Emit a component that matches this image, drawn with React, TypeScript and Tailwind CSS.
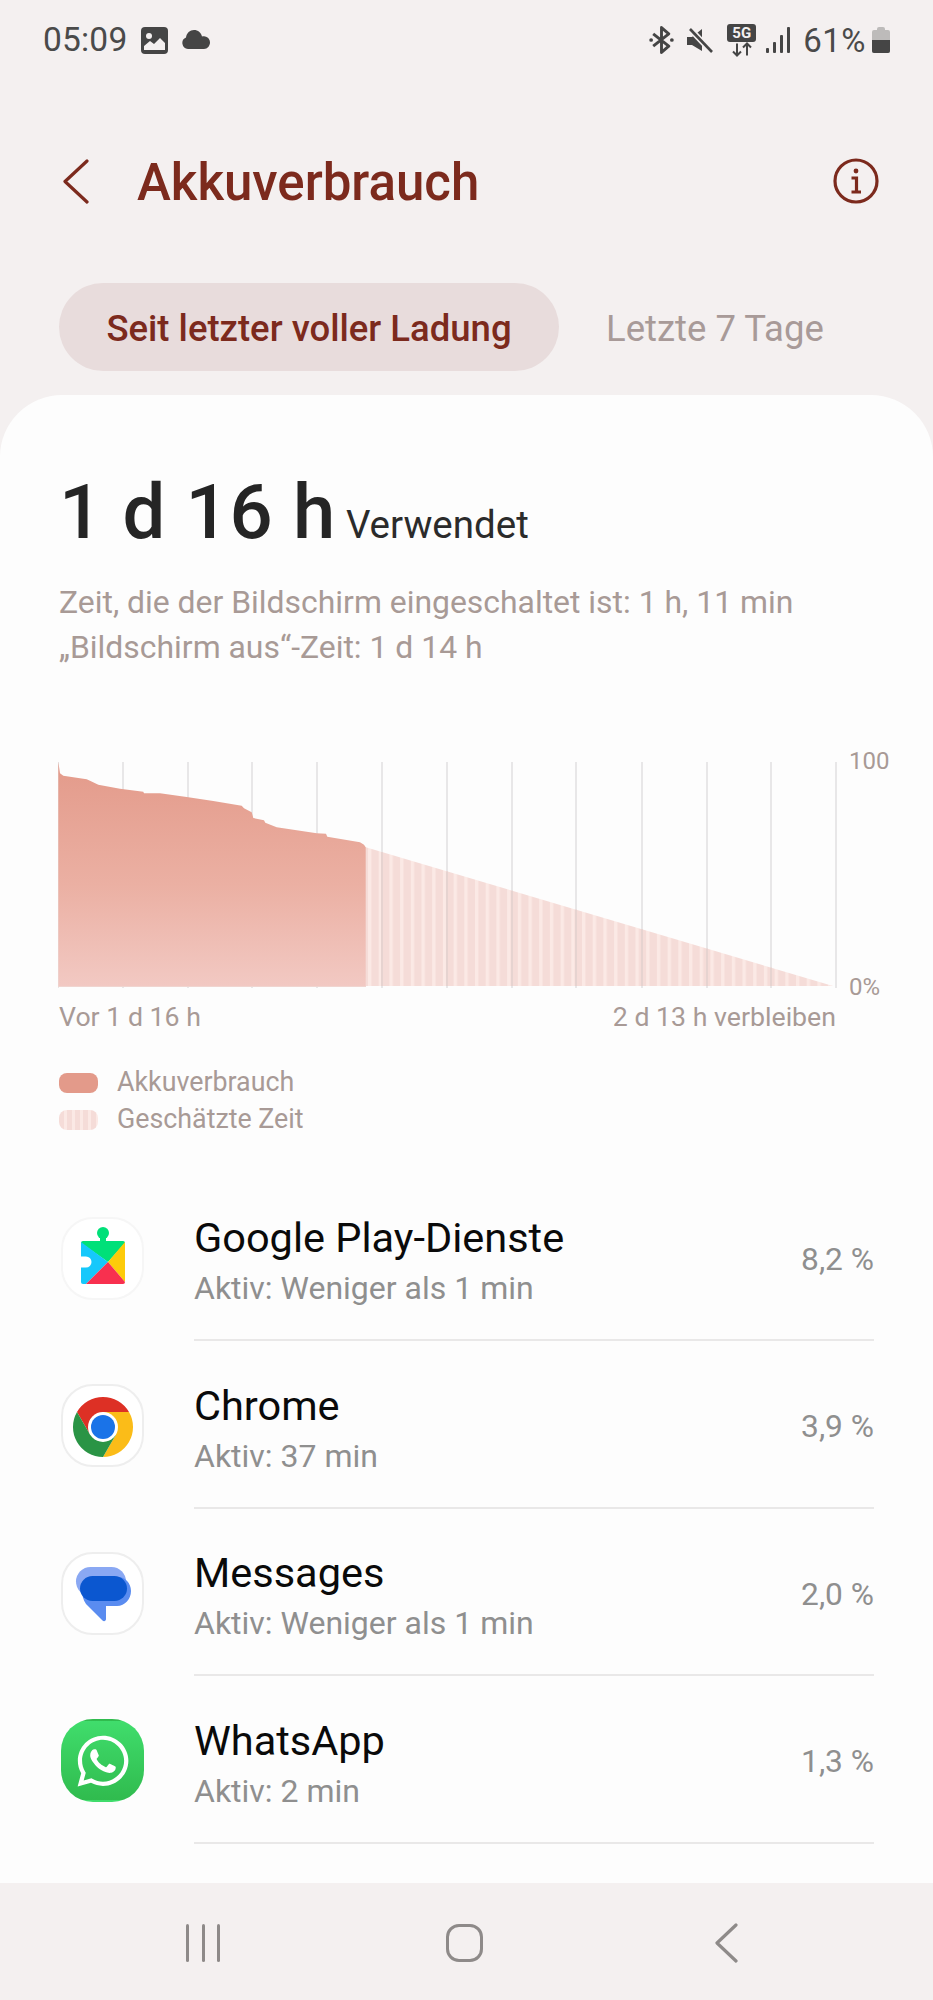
import { FaWhatsapp } from "react-icons/fa";

const curve: [number, number][] = [
  [55, 35], [60, 70], [70, 77], [140, 88], [150, 92], [175, 104], [240, 116], [310, 125], [312, 130],
  [360, 130], [440, 141], [520, 153], [605, 167], [612, 175], [635, 187], [640, 204], [672, 211], [676, 218],
  [710, 232], [830, 250], [858, 251], [862, 260], [960, 277], [972, 284], [977, 292], [977, 710], [55, 710],
];
const usedPoints = curve.map(([x, y]) => `${(40 + x / 3 - 58).toFixed(1)},${(750 + y / 3 - 760).toFixed(1)}`).join(" ");
const gridX = [58, 123, 188, 252, 317, 382, 447, 512, 576, 642, 707, 771, 836];

function BatteryChart() {
  return (
    <svg width="780" height="234" viewBox="0 0 780 234" className="block">
      <defs>
        <linearGradient id="used" x1="0" y1="0" x2="0" y2="1">
          <stop offset="0" stopColor="#e39a8a" />
          <stop offset="0.55" stopColor="#ebb0a3" />
          <stop offset="1" stopColor="#f2c9c3" />
        </linearGradient>
        <pattern id="stripes" width="10.7" height="10" patternUnits="userSpaceOnUse" x="310">
          <rect width="10.7" height="10" fill="#f5dcd8" />
          <rect width="3.4" height="10" fill="#fbe9e5" />
        </pattern>
      </defs>
      {gridX.map((x) => (
        <rect key={x} x={x - 58 - 1} y="2" width="2" height="226" fill="#e8e7e8" />
      ))}
      <polygon points="307,87 775,226 307,226" fill="url(#stripes)" />
      {gridX.filter((x) => x > 370 && x < 830).map((x) => (
        <rect key={x} x={x - 58 - 1} y={87 + ((x - 58 - 307) * 139) / 468} width="2" height={139 - ((x - 58 - 307) * 139) / 468} fill="#e6d3d0" />
      ))}
      <polygon points={usedPoints} fill="url(#used)" />
      <rect x="0" y="226" width="308" height="1" fill="#f0d5d0" />
    </svg>
  );
}

function PlayIcon() {
  return (
    <svg viewBox="0 0 82 82" className="w-[82px] h-[82px] shrink-0">
      <circle cx="41" cy="16" r="6" fill="#00e079" />
      <path d="M19 26a2 2 0 0 1 2-2h40a2 2 0 0 1 2 2L46 45Z" fill="#00e079" />
      <rect x="38" y="18" width="6" height="8" fill="#00e079" />
      <path d="M19 25 46 45 24 67H21a2 2 0 0 1-2-2Z" fill="#16c8fb" />
      <path d="M63 25V65L46 45Z" fill="#fdcb0a" />
      <path d="M46 45 63 65a2 2 0 0 1-2 2H24Z" fill="#f8304f" />
      <path d="M19 39.5h5a5.5 5.5 0 0 1 0 11h-5Z" fill="#fff" />
    </svg>
  );
}

function ChromeIcon() {
  return (
    <svg viewBox="0 0 82 82" className="w-[82px] h-[82px] shrink-0">
      <path d="M15 27A30 30 0 0 1 67 27H41L28 49.5Z" fill="#dd3025" />
      <path d="M67 27A30 30 0 0 1 41 72L54 49.5 41 27Z" fill="#fbbc18" />
      <path d="M41 72A30 30 0 0 1 15 27L28 49.5 54 49.5Z" fill="#2a9445" />
      <circle cx="41" cy="42" r="15" fill="#fff" />
      <circle cx="41" cy="42" r="12" fill="#1a73e8" />
    </svg>
  );
}

function MessagesIcon() {
  return (
    <svg viewBox="0 0 82 82" className="w-[82px] h-[82px] shrink-0">
      <rect x="14" y="15" width="50" height="29" rx="14.5" fill="#8aa8f3" />
      <path d="M20 37c0-7 6-12 13-12h23c7 0 13 6 13 14s-6 15-14 15H44v13c0 2-2 3-3.5 1.5L24 52c-3-4-4-9-4-15Z" fill="#5a8cf0" />
      <rect x="18" y="24" width="47" height="25" rx="12.5" fill="#0b57d0" />
    </svg>
  );
}

const rows = [
  { name: "Google Play-Dienste", sub: "Aktiv: Weniger als 1 min", pct: "8,2 %", icon: <PlayIcon />, box: "bg-white border-[#f6f6f6]" },
  { name: "Chrome", sub: "Aktiv: 37 min", pct: "3,9 %", icon: <ChromeIcon />, box: "bg-white border-[#eeeeee]" },
  { name: "Messages", sub: "Aktiv: Weniger als 1 min", pct: "2,0 %", icon: <MessagesIcon />, box: "bg-white border-[#eeeeee]" },
  {
    name: "WhatsApp",
    sub: "Aktiv: 2 min",
    pct: "1,3 %",
    icon: <FaWhatsapp className="text-white" size={58} />,
    box: "bg-gradient-to-b from-[#40dd6c] to-[#30bb4e] border-transparent",
  },
];

export default function App() {
  return (
    <div className="w-[933px] h-[2000px] overflow-hidden flex flex-col bg-[#f4f0f0] font-['Roboto',sans-serif]">
      {/* status bar */}
      <div className="h-[80px] shrink-0 flex items-center justify-between pl-[43px] pr-[43px] text-[#4a4a4a]">
        <div className="flex items-center">
          <span className="text-[33.500px] leading-none tracking-[0.2px]">05:09</span>
          <svg width="27" height="27" viewBox="0 0 27 27" className="ml-[14px]">
            <rect width="27" height="27" rx="4" fill="#454545" />
            <circle cx="8" cy="9" r="3" fill="#f4f0f0" />
            <path d="M3 23v-4l6-5 4 3 6-6 5 5v7Z" fill="#f4f0f0" />
          </svg>
          <svg width="28" height="20" viewBox="0 0 28 20" className="ml-[14px]">
            <path d="M6 19a6 6 0 0 1-2-11.5C4.500 3 8 0 12 0c4 0 7 2.500 8 6.500 1-.500 2-.500 3 0 3 .500 5 3 5 6s-2.500 6.500-6 6.500Z" fill="#454545" />
          </svg>
        </div>
        <div className="flex items-center">
          <svg width="25" height="28" viewBox="0 0 24 27" fill="none" stroke="#454545" strokeWidth="2.8" strokeLinejoin="round">
            <path d="M4 7.500 19 19.500 12 25.500V1.500L19 7.500 4 19.500" />
            <circle cx="2" cy="13.500" r="1.800" fill="#454545" stroke="none" />
            <circle cx="22" cy="13.500" r="1.800" fill="#454545" stroke="none" />
          </svg>
          <svg width="26" height="26" viewBox="0 0 26 26" className="ml-[13px]">
            <path d="M0 9h5l10-8v22L5 17H0Z" fill="#454545" transform="translate(0 1)" />
            <path d="M3 2 25 25" stroke="#f4f0f0" strokeWidth="6" />
            <path d="M3 2 25 25" stroke="#454545" strokeWidth="2.6" />
          </svg>
          <div className="ml-[14px] w-[29px] h-[33px] flex flex-col items-center">
            <div className="w-[29px] h-[18px] rounded-[3px] bg-[#454545] text-[#f4f0f0] text-[15px] leading-[18px] font-bold text-center">5G</div>
            <svg width="22" height="15" viewBox="0 0 22 14" fill="none" stroke="#454545" strokeWidth="2">
              <path d="M6 1v12M2 9l4 4 4-4M16 13V1M12 5l4-4 4 4" />
            </svg>
          </div>
          <svg width="24" height="26" viewBox="0 0 24 26" fill="#454545" className="ml-[10px]">
            <rect x="0" y="21" width="3" height="5" rx="1" />
            <rect x="7" y="15" width="3" height="11" rx="1" />
            <rect x="14" y="8" width="3" height="18" rx="1" />
            <rect x="21" y="0" width="3" height="26" rx="1" />
          </svg>
          <span className="ml-[13px] text-[33px] leading-none text-[#4a4a4a] tracking-[0.5px]">61%</span>
          <svg width="18" height="26" viewBox="0 0 18 26" className="ml-[6px]">
            <path d="M5 2a2 2 0 0 1 2-2h4a2 2 0 0 1 2 2v1h3a2 2 0 0 1 2 2v19a2 2 0 0 1-2 2H2a2 2 0 0 1-2-2V5a2 2 0 0 1 2-2h3Z" fill="#bdbbba" />
            <path d="M0 13h18v11a2 2 0 0 1-2 2H2a2 2 0 0 1-2-2Z" fill="#454545" />
          </svg>
        </div>
      </div>

      {/* header */}
      <div className="h-[203px] shrink-0 pb-[1px] flex items-center justify-between pl-[63px] pr-[54px]">
        <div className="flex items-center">
          <svg width="26" height="45" viewBox="0 0 26 45" fill="none" stroke="#7c2a1d" strokeWidth="3.2" strokeLinecap="round" strokeLinejoin="round">
            <path d="M24 2 2 22.500 24 43" />
          </svg>
          <h1 className="ml-[48px] mt-[3px] text-[51px] leading-none font-medium text-[#7c2a1d]">Akkuverbrauch</h1>
        </div>
        <svg width="46" height="46" viewBox="0 0 46 46" fill="none" stroke="#7c2a1d" strokeWidth="3.200">
          <circle cx="23" cy="23" r="21" />
          <circle cx="23" cy="13" r="2.400" fill="#7c2a1d" stroke="none" />
          <path d="M18.500 20H23.500V34M18.500 34H28" />
        </svg>
      </div>

      {/* tabs */}
      <div className="h-[88px] shrink-0 flex items-center pl-[59px]">
        <div className="w-[500px] h-[88px] pt-[5px] rounded-full bg-[#e8dcdc] flex items-center justify-center text-[36.500px] font-medium text-[#7c2a1d]">
          Seit letzter voller Ladung
        </div>
        <div className="ml-[47px] pt-[5px] text-[36.500px] text-[#a89a98]">Letzte 7 Tage</div>
      </div>

      {/* card */}
      <div className="mt-[24px] flex-1 min-h-0 bg-[#fdfdfd] rounded-t-[62px] overflow-hidden pt-[75px]">
        <div className="pl-[59px] flex items-baseline h-[84px]">
          <span className="text-[76px] leading-[84px] font-medium text-[#252525] tracking-[0.7px]">1 d 16 h</span>
          <span className="ml-[10px] text-[38.500px] text-[#2b2b2b]">Verwendet</span>
        </div>
        <div className="pl-[59px] mt-[26px] text-[31.900px] leading-[44.500px] text-[#a89a96]">
          <div>Zeit, die der Bildschirm eingeschaltet ist: 1 h, 11 min</div>
          <div>„Bildschirm aus“-Zeit: 1 d 14 h</div>
        </div>

        {/* chart */}
        <div className="mt-[91px] pl-[58px] relative h-[232px]">
          <BatteryChart />
          <span className="absolute left-[849px] top-[-13px] text-[24px] leading-[28px] text-[#a89a96]">100</span>
          <span className="absolute left-[849px] top-[213px] text-[24px] leading-[28px] text-[#a89a96]">0%</span>
        </div>
        <div className="w-[836px] pl-[59px] mt-[10px] flex justify-between text-[26.700px] leading-[30px] text-[#a89a96]">
          <span>Vor 1 d 16 h</span>
          <span>2 d 13 h verbleiben</span>
        </div>

        {/* legend */}
        <div className="mt-[32px] pl-[59px] text-[26.800px] text-[#a89a96]">
          <div className="flex items-center h-[37px]">
            <div className="w-[39px] h-[20px] rounded-[8px] bg-[#e39a8a]" />
            <span className="ml-[19px]">Akkuverbrauch</span>
          </div>
          <div className="flex items-center h-[37px]">
            <div className="w-[39px] h-[20px] rounded-[8px] bg-[repeating-linear-gradient(90deg,#f5dcd8_0px,#f5dcd8_5px,#fbe9e5_5px,#fbe9e5_8px)]" />
            <span className="ml-[19px]">Geschätzte Zeit</span>
          </div>
        </div>

        {/* list */}
        <div className="mt-[35.500px] pl-[61px] pr-[59px]">
          {rows.map((r) => (
            <div key={r.name} className="flex items-start h-[167.500px] pt-[43px]">
              <div className={`w-[83px] h-[83px] shrink-0 rounded-[32px] border-2 flex items-center justify-center overflow-hidden ${r.box}`}>
                {r.icon}
              </div>
              <div className="ml-[50px] flex-1 h-[124.500px] border-b-2 border-[#e9e8e8] flex items-start justify-between">
                <div className="-mt-[1.500px]">
                  <div className="text-[41.500px] leading-[46px] text-[#0a0a0a]">{r.name}</div>
                  <div className="text-[32px] leading-[38px] mt-[8px] text-[#8f8f8f]">{r.sub}</div>
                </div>
                <div className="text-[31.700px] leading-[36px] mt-[25px] text-[#8f8f8f]">{r.pct}</div>
              </div>
            </div>
          ))}
        </div>
      </div>

      {/* nav bar */}
      <div className="h-[117px] shrink-0 flex items-start pt-[41px] bg-[#f4f0f0]">
        <div className="pl-[186px] flex gap-[12.500px]">
          <div className="w-[3px] h-[38px] rounded-full bg-[#8e8a89]" />
          <div className="w-[3px] h-[38px] rounded-full bg-[#8e8a89]" />
          <div className="w-[3px] h-[38px] rounded-full bg-[#8e8a89]" />
        </div>
        <div className="ml-[226px] w-[37px] h-[38px] rounded-[13px] border-[3.500px] border-[#8e8a89]" />
        <svg width="23" height="40" viewBox="0 0 23 40" fill="none" stroke="#8e8a89" strokeWidth="3.200" strokeLinecap="round" strokeLinejoin="round" className="ml-[232px] -mt-[1px]">
          <path d="M21 2 2 20 21 38" />
        </svg>
      </div>
    </div>
  );
}
